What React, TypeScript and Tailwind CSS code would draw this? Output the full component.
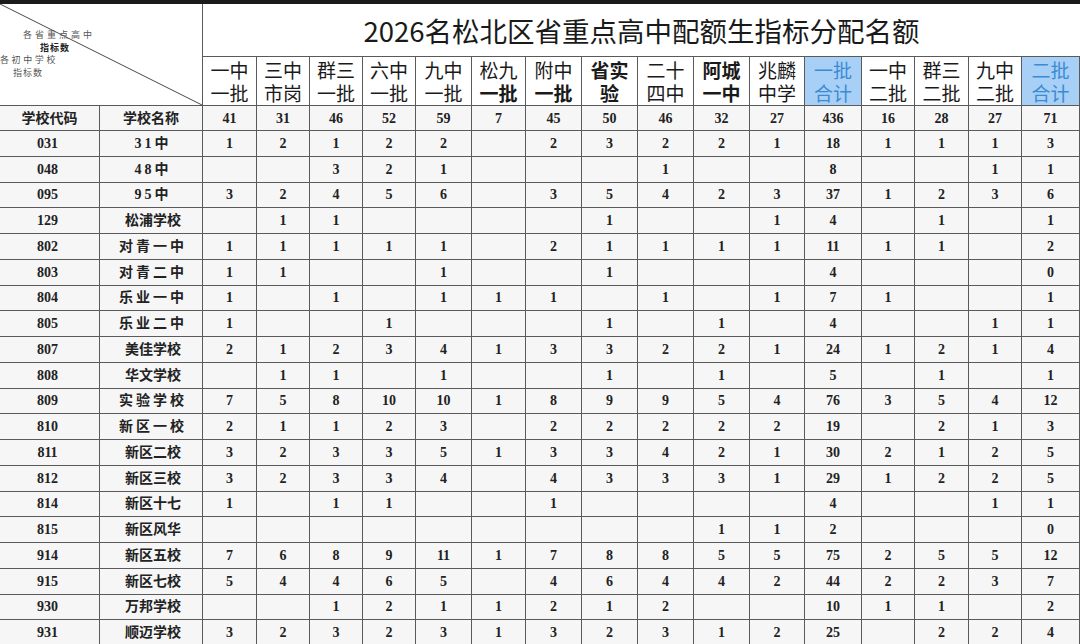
import React from 'react'

const SANS = "font-[family-name:'Noto_Sans_CJK_SC','Noto_Sans',sans-serif]"
const SERIF = "font-[family-name:'Liberation_Serif','Noto_Sans_CJK_SC',serif]"

interface HeadCol {
  top: string
  bottom: string
  bold?: 'both' | 'bottom'
  blue?: boolean
}

const COLS: HeadCol[] = [
  { top: '一中', bottom: '一批' },
  { top: '三中', bottom: '市岗' },
  { top: '群三', bottom: '一批' },
  { top: '六中', bottom: '一批' },
  { top: '九中', bottom: '一批' },
  { top: '松九', bottom: '一批', bold: 'bottom' },
  { top: '附中', bottom: '一批', bold: 'bottom' },
  { top: '省实', bottom: '验', bold: 'both' },
  { top: '二十', bottom: '四中' },
  { top: '阿城', bottom: '一中', bold: 'both' },
  { top: '兆麟', bottom: '中学' },
  { top: '一批', bottom: '合计', blue: true },
  { top: '一中', bottom: '二批' },
  { top: '群三', bottom: '二批' },
  { top: '九中', bottom: '二批' },
  { top: '二批', bottom: '合计', blue: true },
]

const TOTALS = [41, 31, 46, 52, 59, 7, 45, 50, 46, 32, 27, 436, 16, 28, 27, 71]

// code, name, letter-spaced name?, comma list of values (blank = empty cell)
const ROWS: [string, string, boolean, string][] = [
  ['031', '31中', true, '1,2,1,2,2,,2,3,2,2,1,18,1,1,1,3'],
  ['048', '48中', true, ',,3,2,1,,,,1,,,8,,,1,1'],
  ['095', '95中', true, '3,2,4,5,6,,3,5,4,2,3,37,1,2,3,6'],
  ['129', '松浦学校', false, ',1,1,,,,,1,,,1,4,,1,,1'],
  ['802', '对青一中', true, '1,1,1,1,1,,2,1,1,1,1,11,1,1,,2'],
  ['803', '对青二中', true, '1,1,,,1,,,1,,,,4,,,,0'],
  ['804', '乐业一中', true, '1,,1,,1,1,1,,1,,1,7,1,,,1'],
  ['805', '乐业二中', true, '1,,,1,,,,1,,1,,4,,,1,1'],
  ['807', '美佳学校', false, '2,1,2,3,4,1,3,3,2,2,1,24,1,2,1,4'],
  ['808', '华文学校', false, ',1,1,,1,,,1,,1,,5,,1,,1'],
  ['809', '实验学校', true, '7,5,8,10,10,1,8,9,9,5,4,76,3,5,4,12'],
  ['810', '新区一校', true, '2,1,1,2,3,,2,2,2,2,2,19,,2,1,3'],
  ['811', '新区二校', false, '3,2,3,3,5,1,3,3,4,2,1,30,2,1,2,5'],
  ['812', '新区三校', false, '3,2,3,3,4,,4,3,3,3,1,29,1,2,2,5'],
  ['814', '新区十七', false, '1,,1,1,,,1,,,,,4,,,1,1'],
  ['815', '新区风华', false, ',,,,,,,,,1,1,2,,,,0'],
  ['914', '新区五校', false, '7,6,8,9,11,1,7,8,8,5,5,75,2,5,5,12'],
  ['915', '新区七校', false, '5,4,4,6,5,,4,6,4,4,2,44,2,2,3,7'],
  ['930', '万邦学校', false, ',,1,2,1,1,2,1,2,,,10,1,1,,2'],
  ['931', '顺迈学校', false, '3,2,3,2,3,1,3,2,3,1,2,25,,2,2,4'],
]

const cell = 'flex items-center justify-center border-r border-b border-[#5a5a5a]'
const num = `text-[14px] font-bold text-[#222] ${SERIF}`

function DiagonalCell() {
  return (
    <div className="relative col-span-2 row-span-2 overflow-hidden border-r border-b border-[#5a5a5a] bg-white">
      <svg className="absolute inset-0 h-full w-full" preserveAspectRatio="none">
        <line x1="0" y1="0" x2="100%" y2="100%" stroke="#4a4a4a" strokeWidth="1" />
      </svg>
      <div className={`flex flex-col items-start pt-[25px] text-[9px] leading-[12.6px] text-[#555] ${SANS}`}>
        <span className="ml-[23px] tracking-[3px]">各省重点高中</span>
        <span className="ml-[40px] font-bold tracking-[1px] text-[#222]">指标数</span>
        <span className="ml-0 tracking-[2.6px]">各初中学校</span>
        <span className="ml-[13px] tracking-[1px]">指标数</span>
      </div>
    </div>
  )
}

function HeadCell({ col }: { col: HeadCol }) {
  const bg = col.blue ? 'bg-[#a8d0f6] text-[#3b8bd3]' : 'bg-white text-[#1a1a1a]'
  return (
    <div className={`${cell} flex-col text-[19px] leading-[23px] ${bg} ${SANS}`}>
      <span className={col.bold === 'both' ? 'font-bold' : ''}>{col.top}</span>
      <span className={col.bold ? 'font-bold' : ''}>{col.bottom}</span>
    </div>
  )
}

export default function App() {
  return (
    <div className="h-[644px] w-[1080px] overflow-hidden bg-[#f6f6f6]">
      <div className="h-[4px] bg-[#1b1b1b]" />
      <div className="grid grid-cols-[100px_103px_54px_53px_53px_53px_56px_54px_56px_56px_56px_56px_55px_57px_53px_54px_53px_58px] grid-rows-[53px_49px_25px_repeat(20,25.75px)]">
        <DiagonalCell />
        <div
          className={`col-span-16 flex items-center justify-center border-b border-[#5a5a5a] bg-white pt-[2px] text-[27.5px] text-[#1a1a1a] ${SANS}`}
        >
          2026名松北区省重点高中配额生指标分配名额
        </div>
        {COLS.map((c, i) => (
          <HeadCell key={i} col={c} />
        ))}

        <div className={`${cell} ${num}`}>学校代码</div>
        <div className={`${cell} ${num}`}>学校名称</div>
        {TOTALS.map((t, i) => (
          <div key={i} className={`${cell} ${num}`}>
            {t}
          </div>
        ))}

        {ROWS.map(([code, name, spaced, vals]) => (
          <React.Fragment key={code}>
            <div className={`${cell} pr-[4px] ${num}`}>{code}</div>
            <div className={`${cell} pl-[4px] ${spaced ? 'tracking-[3px]' : ''} ${num}`}>{name}</div>
            {vals.split(',').map((v, i) => (
              <div key={i} className={`${cell} ${num}`}>
                {v}
              </div>
            ))}
          </React.Fragment>
        ))}
      </div>
    </div>
  )
}
